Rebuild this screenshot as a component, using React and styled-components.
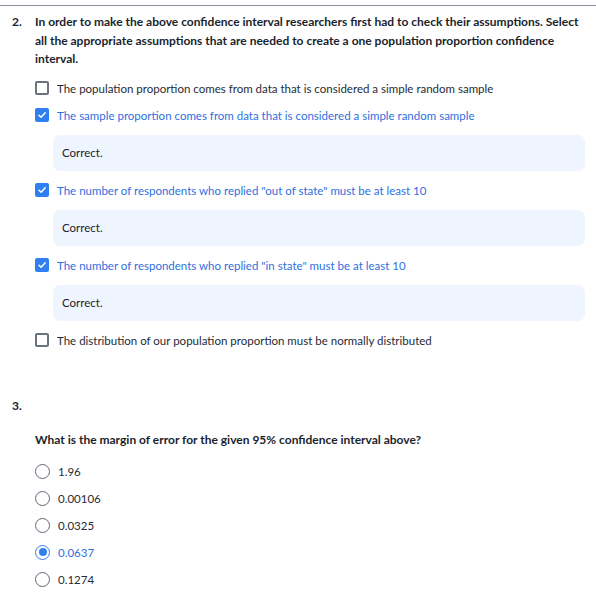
import React from 'react'
import styled, { createGlobalStyle } from 'styled-components'

const GlobalStyle = createGlobalStyle`
  body {
    margin: 0;
    background: #ffffff;
    font-family: Lato, "Noto Sans", sans-serif;
    color: #1d2230;
  }
`

const assumptions = [
  { text: 'The population proportion comes from data that is considered a simple random sample', checked: false },
  { text: 'The sample proportion comes from data that is considered a simple random sample', checked: true, feedback: 'Correct.' },
  { text: 'The number of respondents who replied "out of state" must be at least 10', checked: true, feedback: 'Correct.' },
  { text: 'The number of respondents who replied "in state" must be at least 10', checked: true, feedback: 'Correct.' },
  { text: 'The distribution of our population proportion must be normally distributed', checked: false },
]

const margins = ['1.96', '0.00106', '0.0325', '0.0637', '0.1274']

const CheckIcon = () => (
  <svg width='10' height='10' viewBox='0 0 10 10' fill='none'>
    <path d='M2 5.2 L4.1 7.2 L8.2 2.8' stroke='#fff' strokeWidth='1.5' strokeLinecap='round' strokeLinejoin='round' />
  </svg>
)

export default function App() {
  return (
    <Page>
      <GlobalStyle />
      <Divider />
      <Question>
        <Number>2.</Number>
        <Body>
          <Prompt>
            In order to make the above confidence interval researchers first had to check their assumptions. Select
            all the appropriate assumptions that are needed to create a one population proportion confidence
            interval.
          </Prompt>
          <Options>
            { assumptions.map(a => (
              <React.Fragment key={ a.text }>
                <Option selected={ a.checked }>
                  <Checkbox checked={ a.checked }>{ a.checked && <CheckIcon /> }</Checkbox>
                  { a.text }
                </Option>
                { a.feedback && <Feedback>{ a.feedback }</Feedback> }
              </React.Fragment>
            )) }
          </Options>
        </Body>
      </Question>
      <Question second>
        <Number>3.</Number>
      </Question>
      <Body indented>
        <Prompt spaced>What is the margin of error for the given 95% confidence interval above?</Prompt>
        <Radios>
          { margins.map(m => (
            <Option key={ m } selected={ m === '0.0637' }>
              <Radio checked={ m === '0.0637' } />
              { m }
            </Option>
          )) }
        </Radios>
      </Body>
    </Page>
  )
}

const Page = styled.div`
  width: 596px;
  height: 596px;
  overflow: hidden;
`

const Divider = styled.div`
  height: 1px;
  background: #8b919c;
  margin-top: 5px;
`

const Question = styled.div`
  display: flex;
  padding: ${ props => props.second ? '48px 0 0 12px' : '7px 0 0 12px' };
`

const Number = styled.div`
  width: 23px;
  flex-shrink: 0;
  font-size: 12px;
  font-weight: 700;
  line-height: 18.5px;
`

const Body = styled.div`
  flex: 1;
  padding-left: ${ props => props.indented ? 35 : 0 }px;
`

const Prompt = styled.div`
  font-size: 12px;
  font-weight: 700;
  line-height: 18.5px;
  color: #1b1f2d;
  padding-right: 10px;
  margin-top: ${ props => props.spaced ? 16 : 0 }px;
`

const Options = styled.div`
  display: flex;
  flex-direction: column;
  gap: 10px;
  margin-top: 11px;
  padding-right: 11px;
`

const Option = styled.label`
  display: flex;
  align-items: center;
  gap: 8px;
  height: 17px;
  font-size: 11.5px;
  color: ${ props => props.selected ? '#2f6fde' : '#262b36' };
`

const Checkbox = styled.span`
  box-sizing: border-box;
  width: 14px;
  height: 14px;
  border-radius: 2px;
  border: 2px solid ${ props => props.checked ? '#2f7ff0' : '#6b7280' };
  background: ${ props => props.checked ? '#2f7ff0' : '#fff' };
  display: flex;
  align-items: center;
  justify-content: center;
  flex-shrink: 0;
`

const Feedback = styled.div`
  margin: 1px 0 1px 18px;
  height: 36px;
  box-sizing: border-box;
  padding: 0 9px;
  display: flex;
  align-items: center;
  background: #eef5fe;
  border-radius: 7px;
  font-size: 11.5px;
  color: #1d2230;
`

const Radios = styled.div`
  display: flex;
  flex-direction: column;
  gap: 10px;
  margin-top: 13px;
`

const Radio = styled.span`
  box-sizing: border-box;
  width: 15px;
  height: 15px;
  border-radius: 50%;
  border: 1.5px solid ${ props => props.checked ? '#2f7ff0' : '#5f6878' };
  flex-shrink: 0;
  display: flex;
  align-items: center;
  justify-content: center;

  &::after {
    content: '';
    display: ${ props => props.checked ? 'block' : 'none' };
    width: 8px;
    height: 8px;
    border-radius: 50%;
    background: #2f7ff0;
  }
`
